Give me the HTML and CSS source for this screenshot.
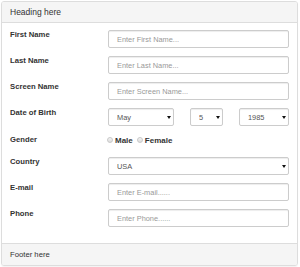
FILE: index.html
```html
<!DOCTYPE html>
<html lang="en">
<head>
    <meta charset="UTF-8">
    <meta name="viewport" content="width=device-width, initial-scale=1.0">
    <title>Registration</title>
    <link rel="stylesheet" href="styles.css">
</head>
<body>
    <div class="panel">
        <div class="panel-heading">Heading here</div>
        <form class="panel-body">
            <div class="form-row">
                <label class="form-label">First Name</label>
                <input class="field" type="text" placeholder="Enter First Name...">
            </div>
            <div class="form-row">
                <label class="form-label">Last Name</label>
                <input class="field" type="text" placeholder="Enter Last Name...">
            </div>
            <div class="form-row">
                <label class="form-label">Screen Name</label>
                <input class="field" type="text" placeholder="Enter Screen Name...">
            </div>
            <div class="form-row">
                <label class="form-label">Date of Birth</label>
                <div class="date-group">
                    <span class="select-wrap month">
                        <select class="field"><option>May</option></select>
                    </span>
                    <span class="select-wrap day">
                        <select class="field"><option>5</option></select>
                    </span>
                    <span class="select-wrap year">
                        <select class="field"><option>1985</option></select>
                    </span>
                </div>
            </div>
            <div class="form-row gender-row">
                <label class="form-label">Gender</label>
                <div class="radio-group">
                    <label class="radio-inline"><span class="radio"></span>Male</label>
                    <label class="radio-inline"><span class="radio"></span>Female</label>
                </div>
            </div>
            <div class="form-row">
                <label class="form-label">Country</label>
                <span class="select-wrap country">
                    <select class="field"><option>USA</option></select>
                </span>
            </div>
            <div class="form-row">
                <label class="form-label">E-mail</label>
                <input class="field" type="text" placeholder="Enter E-mail......">
            </div>
            <div class="form-row">
                <label class="form-label">Phone</label>
                <input class="field" type="text" placeholder="Enter Phone......">
            </div>
        </form>
        <div class="panel-footer">Footer here</div>
    </div>
</body>
</html>
```

FILE: styles.css
```css
body {
    margin: 0;
    padding: 1px;
    font-family: "Liberation Sans", Arial, sans-serif;
    color: #333;
    background-color: #fff;
}
.panel {
    width: 297px;
    box-sizing: border-box;
    border: 1px solid #ddd;
    border-radius: 3px;
    box-shadow: 0 1px 1px rgba(0, 0, 0, 0.05);
}
.panel-heading {
    height: 21px;
    box-sizing: border-box;
    padding: 0 8px;
    background-color: #f5f5f5;
    border-bottom: 1px solid #ddd;
    border-radius: 2px 2px 0 0;
    font-size: 8.5px;
    line-height: 20px;
}
.panel-body {
    margin: 0;
    padding: 7px 8px 8px 8px;
}
.form-row {
    display: flex;
    margin-bottom: 8px;
}
.form-label {
    width: 98px;
    flex: none;
    font-weight: bold;
    font-size: 7.7px;
    line-height: 10px;
}
.field {
    flex: 1;
    width: 100%;
    height: 18px;
    box-sizing: border-box;
    margin: 0;
    padding: 0 8px;
    border: 1px solid #ccc;
    border-radius: 2px;
    background-color: #fff;
    box-shadow: inset 0 1px 1px rgba(0, 0, 0, 0.075);
    font-family: inherit;
    font-size: 7.4px;
    color: #555;
    outline: none;
}
.field::placeholder {
    color: #999;
}
select.field {
    -webkit-appearance: none;
    appearance: none;
}
.date-group {
    flex: 1;
    display: flex;
    gap: 16px;
}
.select-wrap {
    position: relative;
    display: flex;
}
.select-wrap::after {
    content: "";
    position: absolute;
    right: 3px;
    top: 8px;
    border-left: 2px solid transparent;
    border-right: 2px solid transparent;
    border-top: 3px solid #111;
    pointer-events: none;
}
.month {
    width: 66px;
}
.day {
    width: 33px;
}
.year {
    flex: 1;
}
.country {
    flex: 1;
}
.gender-row {
    min-height: 15px;
}
.gender-row .form-label {
    padding-top: 1px;
}
.radio-group {
    display: flex;
    align-items: center;
    height: 12px;
    margin-left: -1px;
}
.radio-inline {
    display: inline-flex;
    align-items: center;
    margin-right: 4px;
    font-weight: bold;
    font-size: 8px;
}
.radio {
    width: 6px;
    height: 6px;
    box-sizing: border-box;
    margin-right: 2px;
    border: 1px solid #c8c8c8;
    border-radius: 50%;
    background: linear-gradient(#f4f4f4, #dcdcdc);
}
.panel-footer {
    height: 22px;
    box-sizing: border-box;
    padding: 0 8px;
    background-color: #f5f5f5;
    border-top: 1px solid #ddd;
    border-radius: 0 0 2px 2px;
    font-size: 7.7px;
    line-height: 21px;
}
```
